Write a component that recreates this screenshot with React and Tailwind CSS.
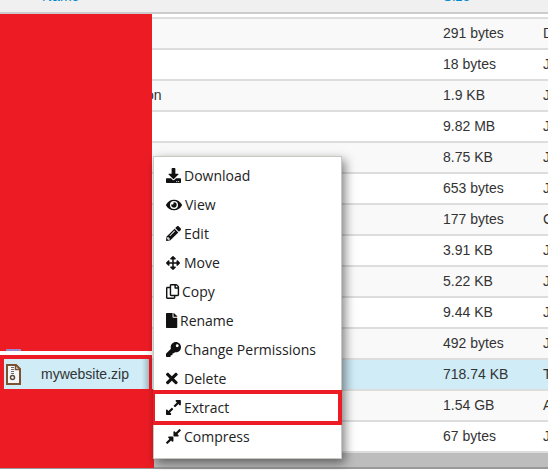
import { FaDownload, FaEye, FaPencilAlt, FaArrowsAlt, FaRegCopy, FaFile, FaKey, FaTimes, FaExpandAlt, FaCompressAlt } from 'react-icons/fa'

const ROWS = [
  { size: '291 bytes', type: 'D' },
  { size: '18 bytes', type: 'J' },
  { name: 'on', size: '1.9 KB', type: 'J' },
  { size: '9.82 MB', type: 'J' },
  { size: '8.75 KB', type: 'J' },
  { size: '653 bytes', type: 'J' },
  { size: '177 bytes', type: 'C' },
  { size: '3.91 KB', type: 'J' },
  { size: '5.22 KB', type: 'J' },
  { size: '9.44 KB', type: 'J' },
  { size: '492 bytes', type: 'J' },
  { size: '718.74 KB', type: 'T', selected: true },
  { size: '1.54 GB', type: 'A' },
  { size: '67 bytes', type: 'J' },
]

const MENU = [
  { label: 'Download', icon: FaDownload, size: 15, col: 'w-[18px]' },
  { label: 'View', icon: FaEye, size: 16, col: 'w-[19px]' },
  { label: 'Edit', icon: FaPencilAlt, size: 15, col: 'w-[18px]' },
  { label: 'Move', icon: FaArrowsAlt, size: 14, col: 'w-[18px]' },
  { label: 'Copy', icon: FaRegCopy, size: 15, col: 'w-[16px]' },
  { label: 'Rename', icon: FaFile, size: 15, col: 'w-[14px]' },
  { label: 'Change Permissions', icon: FaKey, size: 15, col: 'w-[18px]' },
  { label: 'Delete', icon: FaTimes, size: 17, col: 'w-[18px]' },
  { label: 'Extract', icon: FaExpandAlt, size: 17, col: 'w-[18px]' },
  { label: 'Compress', icon: FaCompressAlt, size: 17, col: 'w-[18px]' },
]

function ZipIcon() {
  return (
    <svg width="15" height="21" viewBox="0 0 15 21" fill="none">
      <path d="M1 1H10L14 5V20H1Z" fill="#f4f8fa" stroke="#7d5230" strokeWidth="2" />
      <path d="M9.5 1V5.5H14" stroke="#7d5230" strokeWidth="1.5" />
      <path d="M6.5 3V10" stroke="#6f6a66" strokeWidth="3" strokeDasharray="1 1" />
      <circle cx="6.5" cy="13.5" r="2" fill="#fff" stroke="#5a4a3a" strokeWidth="1.5" />
    </svg>
  )
}

export default function App() {
  return (
    <div className="relative h-[470px] w-[548px] overflow-hidden bg-white font-['Liberation_Sans',sans-serif] text-[14px] text-[#333]">
      <div className="flex h-[14px] items-end overflow-hidden border-b-2 border-[#ccc] bg-[#f0f0f0] pb-[5px] text-[#0088cc]">
        <span className="w-[443px] shrink-0 pl-[42px]">Name</span>
        <span>Size</span>
      </div>
      <div className="h-[3px]"></div>
      <div className="border-t-2 border-[#ddd]">
        {ROWS.map((row, i) => (
          <div
            key={row.size}
            className={`flex h-[31px] items-center border-b-2 border-[#ddd] ${
              row.selected ? 'bg-[#cfecf7]' : i % 2 === 0 ? 'bg-[#f9f9f9]' : 'bg-white'
            }`}
          >
            <span className="w-[443px] shrink-0 pl-[146px]">{row.name}</span>
            <span className="w-[100px] shrink-0">{row.size}</span>
            <span>{row.type}</span>
          </div>
        ))}
      </div>
      <div className="h-[14px] bg-[#bdbdbd]"></div>
      <div className="h-[2px] bg-[#999]"></div>

      {/* redaction */}
      <div className="absolute left-0 top-[14px] h-[454px] w-[152px] bg-[#ed1c24]"></div>
      <div className="absolute left-0 top-[389px] h-[79px] w-[154px] bg-[#ed1c24]"></div>
      <div className="absolute left-0 top-[351px] h-[4px] w-[152px] bg-white"></div>
      <div className="absolute left-[6px] top-[349px] h-[2px] w-[15px] bg-[#9a86c8]"></div>

      <div className="absolute left-[4px] top-[359px] flex h-[30px] w-[145px] items-center bg-gradient-to-r from-[#cfecf7] from-[95%] to-[#a9bfc8] pl-[2px]">
        <ZipIcon />
        <span className="ml-[20px]">mywebsite.zip</span>
      </div>

      <div className="absolute left-[153px] top-[156px] h-[303px] w-[189px] border border-[#c8c8c0] bg-white pt-[4px] font-['Open_Sans',sans-serif] shadow-[3px_4px_10px_rgba(0,0,0,0.5)]">
        {MENU.map(({ label, icon: Icon, size, col }) => (
          <div key={label} className="flex h-[29px] items-center pl-[12px] text-[14px] text-[#222]">
            <span className={`flex shrink-0 items-center ${col}`}>
              <Icon size={size} color="#111" className="shrink-0" preserveAspectRatio="xMinYMid" />
            </span>
            <span>{label}</span>
          </div>
        ))}
      </div>
      <div className="absolute left-[153px] top-[390px] h-[35px] w-[189px] border-[4px] border-l-2 border-[#ed1c24]"></div>
    </div>
  )
}
